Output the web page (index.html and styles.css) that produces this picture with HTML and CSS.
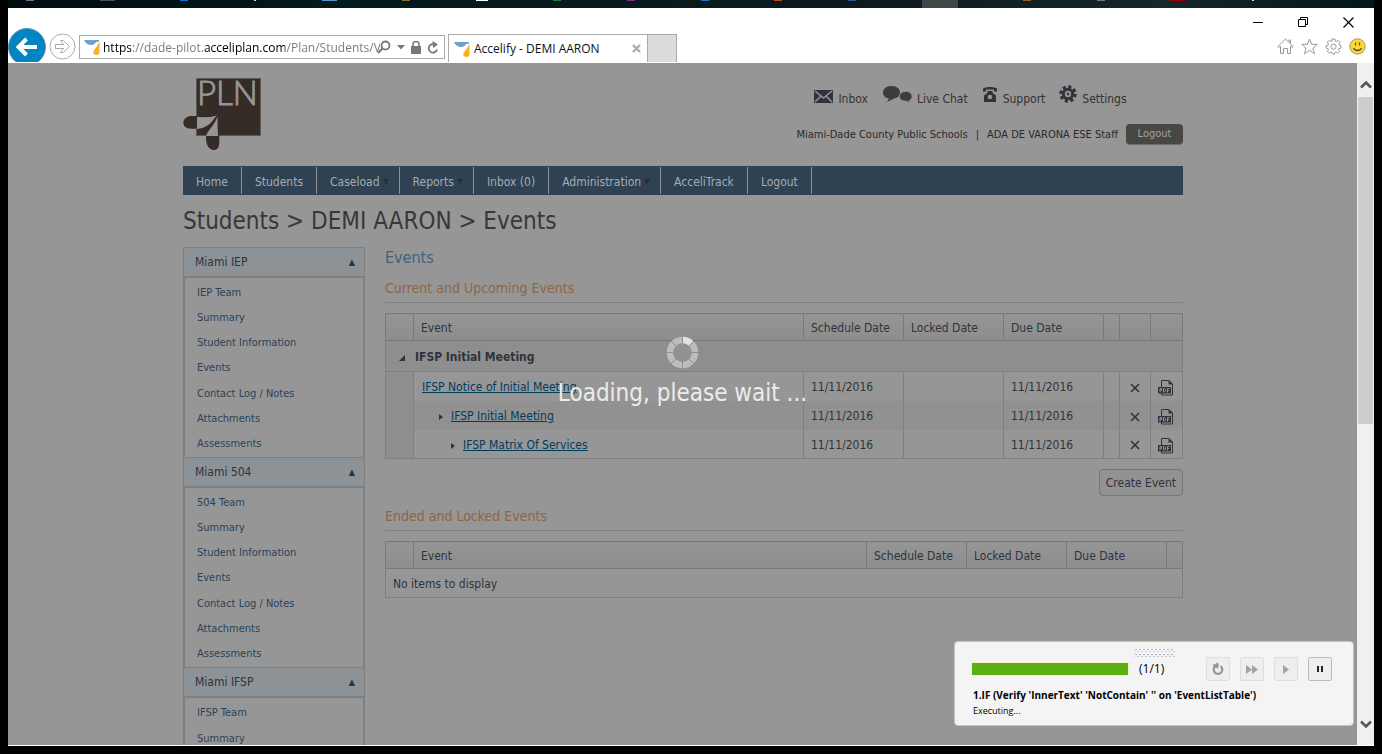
FILE: index.html
```
<!DOCTYPE html>
<html lang="en">
<head>
<meta charset="utf-8">
<title>Accelify - DEMI AARON</title>
<link rel="stylesheet" href="styles.css">
</head>
<body>
<svg class="defs" aria-hidden="true">
  <symbol id="favicon" viewBox="0 0 16 16"><path d="M0 1h15v1.500C11 2.500 11 6 7.500 6 4 6 1.500 4.500 0 1z" fill="#6f9fd0"/><path d="M15.500 2v11c0 2-1 3-3 3-3.500 0-4-3-2-5.500 2-2.500 4-5 5-8.500z" fill="#fbb01d"/></symbol>
  <symbol id="cross" viewBox="0 0 10 10"><path d="M1 1l8 8M9 1l-8 8" fill="none" stroke="currentColor" stroke-width="1.600"/></symbol>
  <symbol id="pdf" viewBox="0 0 16 17">
    <path d="M3.500 8V1.500H11L14.500 5v11h-11v-2" fill="none" stroke="#2e343c"/><path d="M10.500 1v4.500H15z" fill="#2e343c"/>
    <rect y="8" width="13" height="6.500" fill="#2e343c"/>
    <path d="M2 13.500V9.500h1.500v2H2M5.500 9.500v3.500h1l1-1v-1.500l-1-1zM9.500 13.500v-4h2M9.500 11.500H11" fill="none" stroke="#969696"/>
  </symbol>
</svg>
<div class="taskbar"><span class="t1"></span><span class="t2"></span><span class="t3"></span><span class="t4"></span><span class="t5"></span><span class="t6"></span><span class="t7"></span><span class="t8"></span><span class="t9"></span><span class="t10"></span><span class="t11"></span><span class="t12"></span><span class="active"></span><span class="t6"></span><span class="t1"></span><span class="t13"></span><span class="t4"></span></div>
<div class="window">
  <header class="chrome">
    <button class="back" aria-label="Back"><svg viewBox="0 0 38 38"><circle cx="19" cy="19" r="18.500" fill="#0283c4" stroke="#6d94a8"/><path d="M29 19H11M18.500 11L10.500 19l8 8" fill="none" stroke="#fff" stroke-width="4"/></svg></button>
    <button class="forward" aria-label="Forward"><svg viewBox="0 0 27 27"><circle cx="13.500" cy="13.500" r="12.500" fill="#fff" stroke="#aaa"/><path d="M6.500 11.500h8l-3-4h3l6 6-6 6h-3l3-4h-8z" fill="none" stroke="#aaa"/></svg></button>
    <div class="address">
      <svg class="fav"><use href="#favicon"/></svg>
      <input class="url" type="text" aria-label="Address" value="https://dade-pilot.acceliplan.com/Plan/Students/V">
      <button aria-label="Search"><svg width="14" height="14" viewBox="0 0 14 14"><circle cx="8.500" cy="5.500" r="4" fill="none" stroke="#777" stroke-width="1.800"/><path d="M5.500 8.500L1 13" stroke="#777" stroke-width="2"/></svg></button>
      <button aria-label="Address history"><svg width="8" height="5" viewBox="0 0 8 5"><path d="M0 0h8L4 4.500z" fill="#777"/></svg></button>
      <button aria-label="Security report"><svg width="10" height="13" viewBox="0 0 10 13"><rect y="5" width="10" height="8" fill="#777"/><path d="M2 6V3.500a3 3 0 0 1 6 0V6" fill="none" stroke="#777" stroke-width="1.600"/></svg></button>
      <button aria-label="Refresh"><svg width="12" height="13" viewBox="0 0 12 13"><path d="M8.500 4A4.200 4.200 0 1 0 10 8.500" fill="none" stroke="#777" stroke-width="1.800"/><path d="M5.500 0l5.500 3.500L6 7z" fill="#777"/></svg></button>
    </div>
    <div class="tab"><svg class="fav"><use href="#favicon"/></svg><span>Accelify - DEMI AARON</span><button aria-label="Close tab"><svg width="9" height="9" viewBox="0 0 9 9"><path d="M1 1l7 7M8 1L1 8" stroke="#aaa" stroke-width="2.200"/></svg></button></div>
    <button class="newtab" aria-label="New tab"></button>
    <div class="corner">
      <div class="wincontrols">
        <button aria-label="Minimize"><svg width="11" height="11"><path d="M0 5.500h10" stroke="#000"/></svg></button>
        <button aria-label="Restore"><svg width="11" height="11"><path d="M.5 2.500h7v7h-7zM2.500 2.500V.5h7v7H7.500" fill="none" stroke="#000"/></svg></button>
        <button aria-label="Close"><svg width="11" height="11"><path d="M.5.5l10 10M10.500.5l-10 10" stroke="#000" stroke-width="1.200"/></svg></button>
      </div>
      <div class="tools">
        <button aria-label="Home"><svg width="17" height="17" viewBox="0 0 17 17" fill="none" stroke="#999"><path d="M.8 8.500L8.500 1l7.700 7.500-1.200 1-1.500-1.500v7.500h-3v-5h-4v5h-3V8L2 9.500zM12 4V2h1.500v3.500"/></svg></button>
        <button aria-label="Favorites"><svg width="17" height="17" viewBox="0 0 17 17" fill="none" stroke="#999"><path d="M8.500 1l2.200 5.300h5.600l-4.400 3.700 1.600 5.800-5-3.500-5 3.500L5 10 .7 6.300h5.600z"/></svg></button>
        <button aria-label="Tools"><svg width="17" height="17" viewBox="0 0 17 17" fill="none" stroke="#999"><path d="M7 1h3l.4 2.200 1 .4 1.900-1.200 1.700 1.700-1.100 2 .4 1L16 7.500v2.600l-2.200.5-.4 1 1.200 1.700-1.900 1.900-1.800-1.200-1 .4L9.500 16h-2L7 14.400l-1-.4-1.800 1.200L2.300 13.300l1.200-1.700-.4-1L1 10.100V7.500l2.100-.4.4-1-1.100-2 1.700-1.700 2 1.200 1-.4z"/><circle cx="8.500" cy="8.700" r="2.600"/></svg></button>
        <button aria-label="Send feedback"><svg width="17" height="17" viewBox="0 0 17 17"><circle cx="8.500" cy="8.500" r="7.700" fill="#fbd93b" stroke="#a59766"/><path d="M6.500 4.500v3M10.500 4.500v3M4.500 10c1.500 3.300 6.500 3.300 8 0" fill="none" stroke="#5b5326" stroke-width="1.300"/></svg></button>
      </div>
    </div>
  </header>
  <div class="viewport">
    <div class="page">
      <div class="wrap">
        <div class="masthead">
          <a href="#" class="logo" aria-label="PLN"><svg width="79" height="73" viewBox="0 0 79 73"><rect x="13.500" y=".5" width="64" height="57" fill="#352b27" stroke="#5f5855"/><text class="logotext" x="14" y="27">PLN</text>
            <path d="M35 37C28 40 17 38 8 38-2 39-2 50 7 50.500 20 52 26 47 35 37z" fill="#352b27"/><path d="M35 37C28 40 21 39 14 39v12C23 50 28 46 35 37z" fill="#969696"/>
            <path d="M35 37C33 46 23 52 23 60c0 7 3 12 8 12 9 0 4-15 4-35z" fill="#352b27"/><path d="M35 37C32 47 25 52 23 58h12c0-7-1-12 0-21z" fill="#969696"/><path d="M35 37C30 44 24 49 22 57" fill="none" stroke="#352b27" stroke-width="1.500"/></svg></a>
          <div class="account">
            <nav class="quick" aria-label="Quick links">
              <a href="#"><svg width="19" height="13" viewBox="0 0 19 13"><rect width="19" height="13" fill="#30333b"/><path d="M1 1l8.500 7L18 1M1 12l6-6M18 12l-6-6" fill="none" stroke="#969696" stroke-width="1.500"/></svg>Inbox</a>
              <a href="#"><svg width="30" height="18" viewBox="0 0 30 18" fill="#3c3c3c"><path d="M9.500 1C15 1 18 4 18 7.500S15 13 11 14l-6 3 2-3.500C3 13 1 10.500 1 7.500 1 4 4 1 9.500 1z"/><path d="M24 6.500c3.500 0 6 2 6 5 0 2-1 3.500-3 4l1.500 2-5-1.500c-3 0-6-1.500-6-4.500s3-5 6.500-5z" stroke="#969696" stroke-width=".8"/></svg>Live Chat</a>
              <a href="#"><svg width="16" height="17" viewBox="0 0 16 17"><path d="M1 5.500V2.500C4 .5 12 .5 15 2.500v3h-3V3.500H4v2z" fill="#30333b"/><path d="M5.500 5h5v2l3.500 2.500V16H2V9.500L5.500 7z" fill="#30333b"/><circle cx="8" cy="11" r="2.300" fill="#969696"/></svg>Support</a>
              <a href="#"><svg width="18" height="18" viewBox="0 0 18 18"><circle cx="9" cy="9" r="7.200" fill="none" stroke="#30333b" stroke-width="3" stroke-dasharray="3.200 2.455"/><circle cx="9" cy="9" r="4.700" fill="none" stroke="#30333b" stroke-width="3"/><circle cx="9" cy="9" r="1.300" fill="#30333b"/></svg>Settings</a>
            </nav>
            <div class="who"><span>Miami-Dade County Public Schools</span><span>|</span><span>ADA DE VARONA ESE Staff</span><button class="logout">Logout</button></div>
          </div>
        </div>
        <nav class="menu" aria-label="Main">
          <a href="#">Home</a><a href="#">Students</a><a href="#" class="drop">Caseload</a><a href="#" class="drop">Reports</a><a href="#">Inbox (0)</a><a href="#" class="drop">Administration</a><a href="#">AcceliTrack</a><a href="#">Logout</a>
        </nav>
        <h1>Students &gt; DEMI AARON &gt; Events</h1>
        <div class="columns">
          <aside class="side">
            <section><button class="sidehead">Miami IEP<span>▲</span></button>
              <ul><li><a href="#">IEP Team</a></li><li><a href="#">Summary</a></li><li><a href="#">Student Information</a></li><li><a href="#">Events</a></li><li><a href="#">Contact Log / Notes</a></li><li><a href="#">Attachments</a></li><li><a href="#">Assessments</a></li></ul></section>
            <section><button class="sidehead">Miami 504<span>▲</span></button>
              <ul><li><a href="#">504 Team</a></li><li><a href="#">Summary</a></li><li><a href="#">Student Information</a></li><li><a href="#">Events</a></li><li><a href="#">Contact Log / Notes</a></li><li><a href="#">Attachments</a></li><li><a href="#">Assessments</a></li></ul></section>
            <section><button class="sidehead">Miami IFSP<span>▲</span></button>
              <ul class="partial"><li><a href="#">IFSP Team</a></li><li><a href="#">Summary</a></li></ul></section>
          </aside>
          <main>
            <h2>Events</h2>
            <h3>Current and Upcoming Events</h3>
            <table class="grid">
              <colgroup><col class="c-tree"><col><col class="c-date"><col class="c-date"><col class="c-date"><col class="c-slim"><col class="c-del"><col class="c-pdf"></colgroup>
              <thead><tr><th></th><th>Event</th><th>Schedule Date</th><th>Locked Date</th><th>Due Date</th><th></th><th></th><th></th></tr></thead>
              <tbody>
                <tr class="group"><td colspan="8"><span class="open"></span>IFSP Initial Meeting</td></tr>
                <tr><td class="tree" rowspan="3"></td><td class="lvl0"><a href="#">IFSP Notice of Initial Meeting</a></td><td>11/11/2016</td><td></td><td>11/11/2016</td><td></td><td class="act"><button aria-label="Delete"><svg width="10" height="10"><use href="#cross"/></svg></button></td><td class="act"><button aria-label="PDF"><svg width="16" height="17"><use href="#pdf"/></svg></button></td></tr>
                <tr class="alt"><td class="lvl1"><span class="closed"></span><a href="#">IFSP Initial Meeting</a></td><td>11/11/2016</td><td></td><td>11/11/2016</td><td></td><td class="act"><button aria-label="Delete"><svg width="10" height="10"><use href="#cross"/></svg></button></td><td class="act"><button aria-label="PDF"><svg width="16" height="17"><use href="#pdf"/></svg></button></td></tr>
                <tr><td class="lvl2"><span class="closed"></span><a href="#">IFSP Matrix Of Services</a></td><td>11/11/2016</td><td></td><td>11/11/2016</td><td></td><td class="act"><button aria-label="Delete"><svg width="10" height="10"><use href="#cross"/></svg></button></td><td class="act"><button aria-label="PDF"><svg width="16" height="17"><use href="#pdf"/></svg></button></td></tr>
              </tbody>
            </table>
            <div class="actions"><button class="create">Create Event</button></div>
            <h3>Ended and Locked Events</h3>
            <table class="grid">
              <colgroup><col class="c-tree"><col><col class="c-date"><col class="c-date"><col class="c-date"><col class="c-slim"></colgroup>
              <thead><tr><th></th><th>Event</th><th>Schedule Date</th><th>Locked Date</th><th>Due Date</th><th></th></tr></thead>
              <tbody><tr><td colspan="6">No items to display</td></tr></tbody>
            </table>
          </main>
        </div>
      </div>
      <div class="loading" role="status">
        <svg width="33" height="33" viewBox="0 0 33 33"><circle cx="16.500" cy="16.500" r="12.500" fill="none" stroke="#bdbdbd" stroke-width="6.500"/><path d="M16.500 4A12.500 12.500 0 0 1 25.300 7.700" fill="none" stroke="#e2e2e2" stroke-width="6.500"/><path d="M16.500 0v33M0 16.500h33M5 5l23 23M28 5L5 28" stroke="#8f8f8f"/><circle cx="16.500" cy="16.500" r="9.200" fill="#929292"/></svg>
        <p>Loading, please wait ...</p>
      </div>
      <section class="runner" aria-label="Test playback">
        <div class="grip"></div>
        <div class="run">
          <progress value="1" max="1" aria-label="Step progress"></progress><span class="count">(1/1)</span>
          <button disabled aria-label="Restart"><svg width="12" height="14" viewBox="0 0 12 14"><path d="M3.500 4.200A4.300 4.300 0 1 0 8.500 4.200M1 3.500h6" fill="none" stroke="#979797" stroke-width="2.200"/><path d="M1.500 3.500L6 0v7z" fill="#979797"/></svg></button>
          <button disabled aria-label="Fast forward"><svg width="12" height="9" viewBox="0 0 12 9"><path d="M0 0l6 4.500L0 9zM6 0l6 4.500L6 9z" fill="#a2a2a2"/></svg></button>
          <button disabled aria-label="Play"><svg width="6" height="9" viewBox="0 0 6 9"><path d="M0 0l6 4.500L0 9z" fill="#a2a2a2"/></svg></button>
          <button class="pause" aria-label="Pause"><svg width="6" height="6"><path d="M1 0v6M5 0v6" stroke="#222" stroke-width="2"/></svg></button>
        </div>
        <strong>1.IF (Verify 'InnerText' 'NotContain' '' on 'EventListTable')</strong>
        <small>Executing...</small>
      </section>
    </div>
    <div class="scrollbar">
      <button aria-label="Scroll up"><svg width="12" height="9" viewBox="0 0 12 9"><path d="M1 7.500l5-5 5 5" fill="none" stroke="#555" stroke-width="2.500"/></svg></button>
      <div class="thumb"></div>
      <button class="down" aria-label="Scroll down"><svg width="12" height="9" viewBox="0 0 12 9"><path d="M1 1.500l5 5 5-5" fill="none" stroke="#555" stroke-width="2.500"/></svg></button>
    </div>
  </div>
</div>
</body>
</html>
```

FILE: styles.css
```
* { box-sizing: border-box; }
body { margin: 0; height: 100vh; padding: 0 8px 8px; background: #000; display: flex; flex-direction: column; overflow: hidden; font: 12px/16px "DejaVu Sans Condensed", "Noto Sans", sans-serif; color: #2e343c; }
button, input { font: inherit; color: inherit; }
button { padding: 0; border: 0; background: none; }
a { color: inherit; text-decoration: none; }
h1, h2, h3, p, ul { margin: 0; padding: 0; font-weight: normal; }
svg { display: block; flex: none; }
.defs { position: absolute; width: 0; height: 0; }

.taskbar { flex: none; height: 8px; background: linear-gradient(90deg, #000c10, #021a1e 25%, #0c191c 60%, #16262c 85%, #00171a); display: flex; justify-content: space-between; padding: 0 120px 0 18px; }
.taskbar span { width: 8px; height: 1px; background: #777; }
.taskbar .t2 { background: #4a5054; width: 15px; }
.taskbar .t3 { background: #0a78d7; }
.taskbar .t4 { background: #ddd; width: 2px; }
.taskbar .t5 { background: #4a9ad4; width: 15px; }
.taskbar .t6 { background: #8a6a2c; }
.taskbar .t7 { background: #fff; width: 12px; }
.taskbar .t8 { background: #1c7a3c; }
.taskbar .t9 { background: #80307c; }
.taskbar .t10 { background: #0a78d7; }
.taskbar .t11 { background: #c8451f; }
.taskbar .t12 { background: #2b5797; }
.taskbar .active { width: 36px; height: 8px; background: #3f4648; }
.taskbar .t13 { background: #900; width: 16px; }

.window { flex: 1; min-height: 0; display: flex; flex-direction: column; background: #fff; padding-bottom: 1px; }
.chrome { flex: none; height: 55px; display: flex; align-items: flex-end; padding-bottom: 1px; overflow: hidden; font: 12px/16px "Open Sans", "Noto Sans", sans-serif; color: #111; }
.back { width: 38px; height: 34px; overflow: hidden; }
.back svg { width: 38px; height: 38px; }
.forward { width: 27px; height: 27px; margin: 0 3px 2px 3px; }
.address { width: 366px; height: 24px; margin: 0 3px 3px 0; padding: 0 5px 0 4px; border: 1px solid #aaa; display: flex; align-items: center; gap: 6px; }
.fav { width: 16px; height: 16px; }
.url { flex: 1; min-width: 0; height: 20px; padding: 0; margin: 0 -9px 0 -3px; border: 0; outline: 0; background: linear-gradient(90deg, #000 28px, #777 28px 100px, #000 100px 182px, #777 182px); -webkit-background-clip: text; background-clip: text; -webkit-text-fill-color: transparent; }
.tab { width: 200px; height: 28px; padding: 0 6px 0 5px; border: 1px solid #aaa; border-bottom: 0; display: flex; align-items: center; gap: 4px; }
.tab span { flex: 1; white-space: nowrap; }
.newtab { width: 29px; height: 28px; background: #dcdcdc; border: 1px solid #aaa; border-width: 1px 1px 0 0; }
.corner { margin-left: auto; align-self: stretch; display: flex; flex-direction: column; align-items: flex-end; gap: 10px; padding: 9px 8px 0 0; }
.wincontrols { display: flex; gap: 34px; padding-right: 12px; }
.tools { display: flex; gap: 7px; }

.viewport { flex: 1; min-height: 0; display: flex; }
.page { position: relative; flex: 1; min-width: 0; overflow: hidden; background: #969696; padding-left: 1px; }
.wrap { max-width: 1000px; margin: 0 auto; }
.masthead { height: 103px; display: flex; justify-content: space-between; padding-top: 15px; }
.logo { height: 73px; }
.logotext { font: 300 33px Lato, sans-serif; fill: #969696; stroke: #969696; stroke-width: 1px; }
.account { display: flex; flex-direction: column; gap: 15px; padding-top: 5px; }
.quick { display: flex; gap: 14px; padding-left: 18px; height: 26px; align-items: center; }
.quick a { display: flex; align-items: flex-end; gap: 5px; height: 22px; color: #333; }
.quick svg { margin-bottom: 4px; }
.who { display: flex; align-items: center; gap: 8px; font-size: 11px; color: #2a2a2a; white-space: nowrap; }
.logout { width: 57px; height: 21px; border-radius: 4px; background: #484744; color: #a0a0a0; border-bottom: 1px solid #6c6c6c; }
.menu { display: flex; height: 29px; padding: 1px 0; background: #2f4254; color: #a6abb0; }
.menu a { display: flex; align-items: center; padding: 2px 13px 0; border-right: 1px solid #8b9197; white-space: nowrap; }
.menu .drop { padding-right: 10px; }
.drop::after { content: ""; margin-left: 3px; border: 3px solid transparent; border-top: 6px solid #262e37; border-bottom: 0; }
h1 { font-size: 24px; line-height: 52px; color: #383838; }
.columns { display: grid; grid-template-columns: 182px 1fr; gap: 20px; }
.side { border: 1px solid #7d8082; border-width: 1px 1px 0; }
.sidehead { display: flex; width: 100%; height: 29px; align-items: center; justify-content: space-between; padding: 0 9px 0 11px; background: #8c9295; border-bottom: 1px solid #7d8082; }
.sidehead span { font-size: 9px; }
.side ul { list-style: none; display: grid; min-height: 181px; padding: 2px 0 0 12px; border: 1px solid #7d8082; }
.side .partial { min-height: 0; border-bottom: 0; grid-auto-rows: 26px; }
.side li { display: flex; align-items: center; font-size: 11px; color: #2a4258; }
h2 { font-size: 16px; line-height: 22px; color: #3d637f; }
h3 { font-size: 14px; line-height: 27px; padding-top: 6px; border-bottom: 1px solid #828282; margin-bottom: 10px; color: #8f6548; }
.grid { width: 100%; table-layout: fixed; border-collapse: collapse; border: 1px solid #7f7f7f; }
.c-tree { width: 28px; } .c-date { width: 100px; } .c-slim { width: 16px; } .c-del { width: 31px; } .c-pdf { width: 32px; }
.grid th { height: 27px; padding: 2px 7px 0; font-weight: normal; text-align: left; background: linear-gradient(#959595, #8d8d8d); border: 1px solid #797979; white-space: nowrap; }
.grid td { height: 29px; padding: 2px 7px 0; border: solid #7f7f7f; border-width: 0 1px; }
.grid tbody a { color: #003c5c; text-decoration: underline; white-space: nowrap; }
.grid tr.group td { height: 31px; padding: 1px 13px 0; font-weight: bold; background: #8e8e8e; border-bottom: 1px solid #7f7f7f; }
.grid td.tree { background: #8e8e8e; }
.alt td { background: #919191; }
.open { display: inline-block; margin-right: 10px; border: 3px solid transparent; border-right-color: #2e343c; border-bottom-color: #2e343c; }
.closed { display: inline-block; margin-right: 8px; border: 3px solid transparent; border-left: 4px solid #2e343c; border-right: 0; }
.grid td.lvl0 { padding-left: 8px; } .grid td.lvl1 { padding-left: 25px; } .grid td.lvl2 { padding-left: 37px; }
.grid td.act { padding: 3px 1px 0 0; }
.act button { display: block; margin: 0 auto; }
.actions { display: flex; justify-content: flex-end; padding: 10px 0 1px; }
.create { height: 27px; padding: 0 6px; border: 1px solid #777; border-radius: 4px; background: #929292; }
.loading { position: absolute; left: 0; right: 0; top: 40%; display: flex; flex-direction: column; align-items: center; gap: 8px; color: #ececec; font-size: 24px; line-height: 32px; }

.runner { position: absolute; right: 3px; bottom: 19px; width: 400px; padding: 5px 21px 8px 16px; border: 1px solid #c4c4c4; border-radius: 4px; background: #f4f4f4; color: #000; font-family: "Open Sans", "Noto Sans", sans-serif; display: flex; flex-direction: column; }
.grip { height: 10px; width: 41px; margin-left: 163px; background: radial-gradient(circle, #aab2cc 1px, transparent 1px) 0 0 / 4px 5px, radial-gradient(circle, #c4cadb 1px, transparent 1px) 2px 2px / 4px 5px; }
.run { display: flex; align-items: center; gap: 10px; margin-bottom: 6px; }
.run button { width: 24px; height: 24px; border: 1px solid #dedede; border-radius: 2px; background: #eee; display: grid; place-items: center; }
.run .pause { border-color: #bcbcbc; }
progress { appearance: none; width: 158px; height: 14px; border: 1px solid #fbeec8; }
progress::-webkit-progress-bar { background: #eee; }
progress::-webkit-progress-value { background: #5bb014; }
.count { flex: 1; }
.runner strong { font-size: 10px; line-height: 17px; padding-left: 2px; }
.runner small { font-size: 9px; line-height: 13px; padding-left: 2px; }

.scrollbar { width: 17px; background: #f0f0f0; display: flex; flex-direction: column; align-items: center; padding: 0 1px; }
.scrollbar button { height: 34px; padding-top: 8px; }
.scrollbar .down { height: 32px; margin-top: auto; padding: 0 0 10px; }
.thumb { width: 100%; height: 48%; background: #cdcdcd; }
```
